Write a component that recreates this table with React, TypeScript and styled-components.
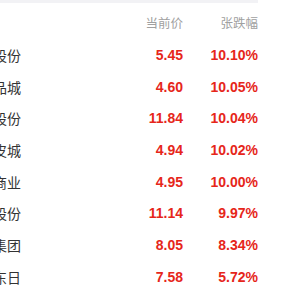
import React from 'react';
import styled, { createGlobalStyle } from 'styled-components';

const GlobalStyle = createGlobalStyle`
  html, body {
    margin: 0;
    padding: 0;
    background: #ffffff;
    overflow: hidden;
  }
  body {
    font-family: "Liberation Sans", Arial, "Noto Sans CJK SC", sans-serif;
  }
`;

const Viewport = styled('div')`
  width: 300px;
  height: 300px;
  overflow: hidden;
`;

const Table = styled('div')`
  width: 293px;
  margin-left: -35px;
  border-top: 3px solid #f2f2f5;
`;

const HeadRow = styled('div')`
  display: grid;
  grid-template-columns: 138px 80px 75px;
  height: 36px;
  padding-top: 5px;
  box-sizing: border-box;
  align-items: center;
`;

const HeadCell = styled('div')`
  text-align: right;
  font-family: "Noto Sans CJK SC", sans-serif;
  font-size: 12.5px;
  color: #a0a0a0;
  line-height: 1;
`;

const Row = styled('div')`
  display: grid;
  grid-template-columns: 138px 80px 75px;
  height: 31.7px;
  align-items: center;
`;

const Name = styled('div')`
  font-family: "Noto Sans CJK SC", sans-serif;
  font-size: 14px;
  color: #333333;
  line-height: 1;
  white-space: nowrap;
`;

const Num = styled('div')`
  text-align: right;
  font-family: "Liberation Sans", Arial, sans-serif;
  font-weight: bold;
  font-size: 14px;
  color: #e6261a;
  line-height: 1;
`;

const stocks = [
  { name: '华联股份', price: '5.45', pct: '10.10%' },
  { name: '小商品城', price: '4.60', pct: '10.05%' },
  { name: '凯撒股份', price: '11.84', pct: '10.04%' },
  { name: '海宁皮城', price: '4.94', pct: '10.02%' },
  { name: '供销商业', price: '4.95', pct: '10.00%' },
  { name: '万盛股份', price: '11.14', pct: '9.97%' },
  { name: '百大集团', price: '8.05', pct: '8.34%' },
  { name: '浙江东日', price: '7.58', pct: '5.72%' },
];

const App: React.FC = () => {
  return (
    <Viewport>
      <GlobalStyle />
      <Table>
        <HeadRow>
          <HeadCell />
          <HeadCell>当前价</HeadCell>
          <HeadCell>张跌幅</HeadCell>
        </HeadRow>
        {stocks.map((s) => (
          <Row key={s.name}>
            <Name>{s.name}</Name>
            <Num>{s.price}</Num>
            <Num>{s.pct}</Num>
          </Row>
        ))}
      </Table>
    </Viewport>
  );
};

export default App;
